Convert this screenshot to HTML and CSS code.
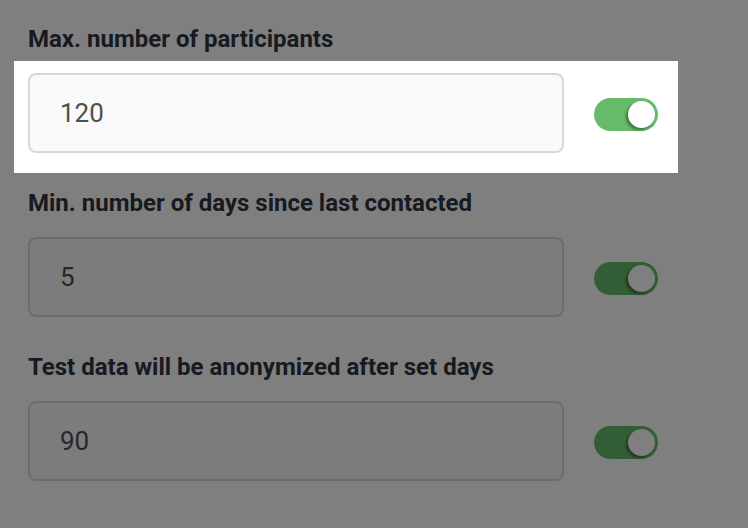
FILE: index.html
```html
<!DOCTYPE html>
<html lang="en">
  <head>
    <meta charset="UTF-8" />
    <meta name="viewport" content="width=device-width, initial-scale=1.0" />
    <title>Study settings</title>
    <link rel="stylesheet" href="styles.css">
  </head>
  <body>
    <div class="settings">
      <div class="field">
        <label class="label" for="max">Max. number of participants</label>
        <div class="row highlight">
          <input class="input" id="max" type="text" value="120" />
          <span class="toggle on"><span class="knob"></span></span>
        </div>
      </div>
      <div class="field">
        <label class="label" for="min">Min. number of days since last contacted</label>
        <div class="row">
          <input class="input" id="min" type="text" value="5" />
          <span class="toggle on"><span class="knob"></span></span>
        </div>
      </div>
      <div class="field">
        <label class="label" for="anon">Test data will be anonymized after set days</label>
        <div class="row">
          <input class="input" id="anon" type="text" value="90" />
          <span class="toggle on"><span class="knob"></span></span>
        </div>
      </div>
    </div>
    <div class="overlay"></div>
  </body>
</html>
```

FILE: styles.css
```css
* {
  margin: 0;
  padding: 0;
  box-sizing: border-box;
}
body {
  background: #fff;
  font-family: Roboto, "Liberation Sans", Arial, sans-serif;
  overflow: hidden;
}
.settings {
  padding: 25px 0 0 28px;
}
.field {
  margin-bottom: 36px;
}
.label {
  display: block;
  font-size: 24px;
  font-weight: 700;
  line-height: 28px;
  color: #2f3440;
  margin-bottom: 20px;
}
.row {
  display: flex;
  align-items: center;
  gap: 30px;
}
/* the step of the tour that sits above the dimmed page */
.highlight {
  position: relative;
  z-index: 2;
  width: 664px;
  background: #fff;
  margin: -12px 0 -20px -14px;
  padding: 12px 20px 20px 14px;
}
.input {
  width: 536px;
  height: 80px;
  border: 2px solid #d8d8d8;
  border-radius: 8px;
  background: #f9f9f9;
  padding: 0 30px;
  font-family: inherit;
  font-size: 26px;
  color: #4f4f4f;
  outline: none;
}
.toggle {
  position: relative;
  display: block;
  width: 64px;
  height: 33px;
  margin-top: 3px;
  border-radius: 17px;
  background: #66bb6a;
}
.toggle .knob {
  position: absolute;
  top: 3px;
  right: 3px;
  width: 27px;
  height: 27px;
  border-radius: 50%;
  background: #fff;
  box-shadow: -2px 2px 3px rgba(0, 0, 0, 0.4);
}
.overlay {
  position: fixed;
  top: 0;
  left: 0;
  right: 0;
  bottom: 0;
  z-index: 1;
  background: rgba(0, 0, 0, 0.5);
}
```
